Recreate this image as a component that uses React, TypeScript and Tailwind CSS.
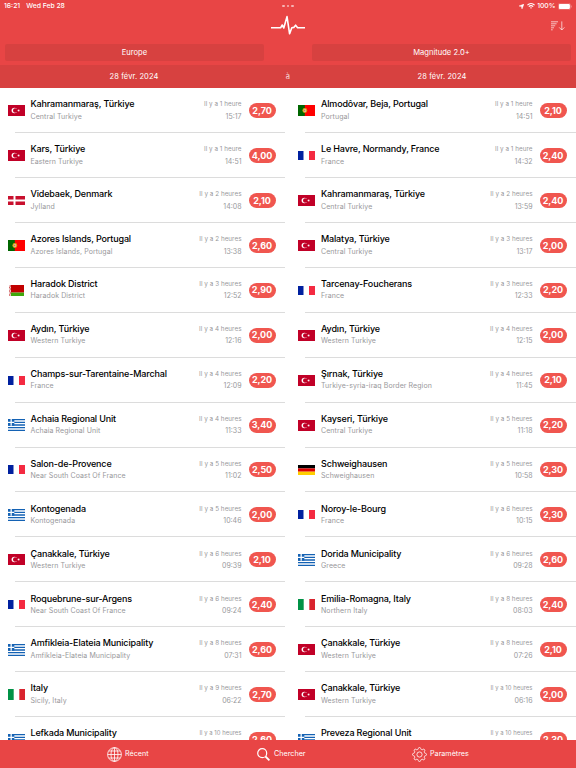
import React from "react";

type Country = "tr" | "dk" | "pt" | "by" | "fr" | "gr" | "it" | "de";
type Quake = [Country, string, string, string, string, string];

const LEFT_COLUMN: Quake[] = [
  ["tr", "Kahramanmaraş, Türkiye", "Central Turkiye", "1 heure", "15:17", "2,70"],
  ["tr", "Kars, Türkiye", "Eastern Turkiye", "1 heure", "14:51", "4,00"],
  ["dk", "Videbaek, Denmark", "Jylland", "2 heures", "14:08", "2,10"],
  ["pt", "Azores Islands, Portugal", "Azores Islands, Portugal", "2 heures", "13:38", "2,60"],
  ["by", "Haradok District", "Haradok District", "3 heures", "12:52", "2,90"],
  ["tr", "Aydın, Türkiye", "Western Turkiye", "4 heures", "12:16", "2,00"],
  ["fr", "Champs-sur-Tarentaine-Marchal", "France", "4 heures", "12:09", "2,20"],
  ["gr", "Achaia Regional Unit", "Achaia Regional Unit", "4 heures", "11:33", "3,40"],
  ["fr", "Salon-de-Provence", "Near South Coast Of France", "5 heures", "11:02", "2,50"],
  ["gr", "Kontogenada", "Kontogenada", "5 heures", "10:46", "2,00"],
  ["tr", "Çanakkale, Türkiye", "Western Turkiye", "6 heures", "09:39", "2,10"],
  ["fr", "Roquebrune-sur-Argens", "Near South Coast Of France", "6 heures", "09:24", "2,40"],
  ["gr", "Amfikleia-Elateia Municipality", "Amfikleia-Elateia Municipality", "8 heures", "07:31", "2,60"],
  ["it", "Italy", "Sicily, Italy", "9 heures", "06:22", "2,70"],
  ["gr", "Lefkada Municipality", "", "10 heures", "", "2,60"],
];

const RIGHT_COLUMN: Quake[] = [
  ["pt", "Almodôvar, Beja, Portugal", "Portugal", "1 heure", "14:51", "2,10"],
  ["fr", "Le Havre, Normandy, France", "France", "1 heure", "14:32", "2,40"],
  ["tr", "Kahramanmaraş, Türkiye", "Central Turkiye", "2 heures", "13:59", "2,40"],
  ["tr", "Malatya, Türkiye", "Central Turkiye", "3 heures", "13:17", "2,00"],
  ["fr", "Tarcenay-Foucherans", "France", "3 heures", "12:33", "2,20"],
  ["tr", "Aydın, Türkiye", "Western Turkiye", "4 heures", "12:15", "2,00"],
  ["tr", "Şırnak, Türkiye", "Turkiye-syria-iraq Border Region", "4 heures", "11:45", "2,10"],
  ["tr", "Kayseri, Türkiye", "Central Turkiye", "5 heures", "11:18", "2,20"],
  ["de", "Schweighausen", "Schweighausen", "5 heures", "10:58", "2,30"],
  ["fr", "Noroy-le-Bourg", "France", "6 heures", "10:15", "2,30"],
  ["gr", "Dorida Municipality", "Greece", "6 heures", "09:28", "2,60"],
  ["it", "Emilia-Romagna, Italy", "Northern Italy", "8 heures", "08:03", "2,40"],
  ["tr", "Çanakkale, Türkiye", "Western Turkiye", "8 heures", "07:26", "2,10"],
  ["tr", "Çanakkale, Türkiye", "Western Turkiye", "10 heures", "06:16", "2,00"],
  ["gr", "Preveza Regional Unit", "", "10 heures", "", "2,30"],
];

const Flag: React.FC<{ country: Country }> = ({ country }) => {
  switch (country) {
    case "tr":
      return (
        <svg width="17" height="11" viewBox="0 0 17 11">
          <rect width="17" height="11" fill="#c10027" />
          <circle cx="6.4" cy="5.5" r="2.8" fill="#fff" />
          <circle cx="7.2" cy="5.5" r="2.2" fill="#c10027" />
          <path d="M9 5.5l1.1-.35.05-1.1.65.9 1.1-.3-.7.85.7.85-1.1-.3-.65.9-.05-1.1z" fill="#fff" />
        </svg>
      );
    case "dk":
      return (
        <svg width="17" height="9" viewBox="0 0 17 9">
          <rect width="17" height="9" fill="#fff" />
          <path d="M0 0h5.5v3.5H0zM7.5 0H17v3.5H7.5zM0 5.5h5.5V9H0zM7.5 5.5H17V9H7.5z" fill="#c8102e" />
        </svg>
      );
    case "pt":
      return (
        <svg width="17" height="11" viewBox="0 0 17 11">
          <rect width="17" height="11" fill="#ff0000" />
          <rect width="6.8" height="11" fill="#006600" />
          <circle cx="6.8" cy="5.5" r="2.4" fill="#d9a514" />
          <rect x="5.8" y="4.2" width="2" height="2.6" fill="#f3dcdc" />
          <rect x="6.3" y="4.6" width="1" height="1.8" fill="#c93a3a" />
        </svg>
      );
    case "by":
      return (
        <svg width="17" height="11" viewBox="0 0 17 11">
          <path d="M3 0h13v7.6H3z" fill="#c10000" />
          <path d="M3 7.6h13V11H3z" fill="#3fa80c" />
          <path d="M1 0h2v11H1z" fill="#eec4c4" />
          <path d="M1 1.5l1 1-1 1zM3 0v2L2 1zM3 3v2L2 4zM1 5l1 1-1 1zM3 7v2L2 8zM1 9l1 1-1 1z" fill="#c83c3c" />
        </svg>
      );
    case "fr":
      return (
        <svg width="17" height="9" viewBox="0 0 17 9">
          <path d="M0 0h5.5v9H0z" fill="#00209f" />
          <path d="M11 0h6v9h-6z" fill="#f42a41" />
        </svg>
      );
    case "it":
      return (
        <svg width="17" height="11" viewBox="0 0 17 11">
          <path d="M0 0h5.7v11H0z" fill="#009246" />
          <path d="M11.3 0H17v11h-5.7z" fill="#d9232e" />
        </svg>
      );
    case "de":
      return (
        <svg width="17" height="10" viewBox="0 0 17 10">
          <path d="M0 0h17v3.4H0z" fill="#000" />
          <path d="M0 3.4h17v3.3H0z" fill="#dd0000" />
          <path d="M0 6.7h17V10H0z" fill="#ffce00" />
        </svg>
      );
    case "gr":
      return (
        <svg width="17" height="12" viewBox="0 0 18 12" preserveAspectRatio="none">
          <rect width="18" height="12" fill="#fff" />
          <path
            d="M0 .67h18M0 3.33h18M0 6h18M0 8.67h18M0 11.33h18"
            stroke="#1462b4"
            strokeWidth="1.34"
          />
          <path d="M0 0h6.7v6.67H0z" fill="#1462b4" />
          <path d="M3.35 0v6.67M0 3.33h6.7" stroke="#fff" strokeWidth="1.34" />
        </svg>
      );
  }
};

const QuakeRow: React.FC<{ quake: Quake }> = ({ quake }) => {
  const [country, place, region, ago, time, magnitude] = quake;
  const agoSize = ago.startsWith("10") ? "text-[5.9px]" : "text-[6.3px]";

  return (
    <li className="flex h-[44.94px] flex-col pl-[7.5px]">
      <div className="flex flex-1 items-center pt-px pr-[9.5px]">
        <span className="flex w-[17px] shrink-0 items-center">
          <Flag country={country} />
        </span>
        <div className="ml-[6px] flex-1 whitespace-nowrap">
          <p className="h-[12.5px] text-[9px] leading-[12.5px] font-medium tracking-[-0.16px] text-black">{place}</p>
          <p className="h-[12px] text-[7px] leading-[12px] tracking-[0.08px] text-[#98989b]">{region}</p>
        </div>
        <div className="mr-[7px] text-right whitespace-nowrap text-[#98989b]">
          <p className={`h-[12.5px] leading-[12.5px] tracking-[0.04px] ${agoSize}`}>Il y a {ago}</p>
          <p className="h-[12px] text-[7px] leading-[12px]">{time}</p>
        </div>
        <span className="flex h-[15px] w-[27px] items-center justify-center rounded-full bg-[#f0564f] text-[9px] font-bold tracking-[-0.05px] text-white">
          {magnitude}
        </span>
      </div>
      <div className="ml-[7px] h-px shrink-0 bg-[#dcdcdc]" />
    </li>
  );
};

const StatusBar: React.FC = () => (
  <div className="flex h-3 items-center pr-1 pl-1 text-[6.8px] font-medium">
    <div className="flex flex-1 gap-[6px]">
      <span>16:21</span>
      <span>Wed Feb 28</span>
    </div>
    <div className="flex gap-[2px]">
      <span className="size-[2.5px] rounded-full bg-white/60" />
      <span className="size-[2.5px] rounded-full bg-white/60" />
      <span className="size-[2.5px] rounded-full bg-white/60" />
    </div>
    <div className="flex flex-1 items-center justify-end gap-[2.5px]">
      <svg width="5" height="5" viewBox="0 0 5 5">
        <path d="M5 0L3 5 2.4 2.6 0 2z" fill="#fff" stroke="#fff" strokeWidth=".4" />
      </svg>
      <svg width="8" height="6" viewBox="0 0 8 6" fill="none" stroke="#fff" strokeWidth="1.1">
        <path d="M.4 2.1a5.2 5.2 0 0 1 7.2 0M1.8 3.6a3.2 3.2 0 0 1 4.4 0" />
        <path d="M3 4.7a1.5 1.5 0 0 1 2 0L4 5.8z" fill="#fff" stroke="none" />
      </svg>
      <span>100%</span>
      <svg width="14" height="7" viewBox="0 0 14 7">
        <rect x=".3" y=".3" width="12.2" height="6.4" rx="1.6" fill="none" stroke="#fff" strokeOpacity=".4" strokeWidth=".5" />
        <rect x=".9" y=".9" width="11" height="5.2" rx="1" fill="#fff" />
        <path d="M13.3 2.5v2" stroke="#fff" strokeOpacity=".5" strokeWidth=".7" />
      </svg>
    </div>
  </div>
);

const Header: React.FC = () => (
  <header className="flex h-[88px] shrink-0 flex-col bg-[#e84545] text-white">
    <StatusBar />
    <div className="flex h-8 items-start">
      <div className="w-[271px]" />
      <svg className="mt-[3px]" width="34" height="21" viewBox="0 0 34 21" fill="none" stroke="#fff" strokeLinejoin="round">
        <path
          d="M0 12.8h9.6l1.6-2.8 1.6 3L16 1.6l2.6 17.2 2.2-6 2-.4 1.8-2.2 2 2.6H34"
          strokeWidth="1.6"
        />
      </svg>
      <div className="flex w-[271px] justify-end pr-[11px]">
        <svg className="mt-[8.5px]" width="14" height="10" viewBox="0 0 14 10" fill="none" stroke="#fff" strokeOpacity=".75" strokeWidth=".9">
          <path d="M0 .8h7M0 2.8h5.6M0 4.8h4.2M0 6.8h3M0 8.8h1.7" />
          <path d="M10.8 .4v8.4M8.2 6.4L10.8 9l2.6-2.6" />
        </svg>
      </div>
    </div>
    <div className="flex h-[17px] gap-12 px-[5px] text-[7.6px]">
      <div className="flex flex-1 items-center justify-center rounded-[2px] bg-[#d74140] pt-px">Europe</div>
      <div className="flex flex-1 items-center justify-center rounded-[2px] bg-[#d74140] pt-px">Magnitude 2.0+</div>
    </div>
    <div className="mt-[4px] flex h-[23px] items-center bg-[#d74140] pt-px text-center text-[7.5px] tracking-[0.1px]">
      <span className="w-[268px]">28 févr. 2024</span>
      <span className="w-10 opacity-80">à</span>
      <span className="w-[268px]">28 févr. 2024</span>
    </div>
  </header>
);

const GlobeIcon = () => (
  <svg width="15" height="15" viewBox="0 0 15 15" fill="none" stroke="#fff" strokeWidth=".8">
    <circle cx="7.5" cy="7.5" r="6.9" />
    <ellipse cx="7.5" cy="7.5" rx="3.5" ry="6.9" />
    <path d="M7.5.6v13.8M.6 7.5h13.8M1.7 4h11.6M1.7 11h11.6" />
  </svg>
);

const SearchIcon = () => (
  <svg width="13" height="13" viewBox="0 0 13 13" fill="none" stroke="#fff">
    <circle cx="5.2" cy="5.2" r="4.5" strokeWidth="1.2" />
    <path d="M8.5 8.5l3.9 3.9" strokeWidth="1.8" />
  </svg>
);

const TEETH = [0, 45, 90, 135, 180, 225, 270, 315];

const GearIcon = () => (
  <svg width="15" height="15" viewBox="-7.5 -7.5 15 15" fill="none" stroke="#fff" strokeWidth=".8">
    <circle r="2.6" />
    {TEETH.map((angle) => (
      <path
        key={angle}
        transform={`rotate(${angle})`}
        d="M-2.04-4.93Q-1.2-5-1.1-6.2Q-1-7 0-7Q1-7 1.1-6.2Q1.2-5 2.04-4.93"
      />
    ))}
  </svg>
);

const TabBar: React.FC = () => (
  <nav className="flex h-[28px] shrink-0 items-center bg-[#e84545] pl-[107px] text-[7.2px] text-white">
    <div className="flex w-[150px] items-center gap-[3px]">
      <GlobeIcon />
      <span className="pt-px">Récent</span>
    </div>
    <div className="flex w-[155px] items-center gap-1">
      <SearchIcon />
      <span className="pt-px">Chercher</span>
    </div>
    <div className="flex items-center gap-[3px]">
      <GearIcon />
      <span className="pt-px">Paramètres</span>
    </div>
  </nav>
);

export default function App() {
  return (
    <div className="flex h-[768px] w-[576px] flex-col overflow-hidden bg-white font-['Inter',sans-serif]">
      <Header />
      <main className="flex min-h-0 flex-1 gap-[5.5px] overflow-hidden">
        <ul className="w-[285px]">
          {LEFT_COLUMN.map((quake, i) => (
            <QuakeRow key={i} quake={quake} />
          ))}
        </ul>
        <ul className="w-[285.5px]">
          {RIGHT_COLUMN.map((quake, i) => (
            <QuakeRow key={i} quake={quake} />
          ))}
        </ul>
      </main>
      <TabBar />
    </div>
  );
}
